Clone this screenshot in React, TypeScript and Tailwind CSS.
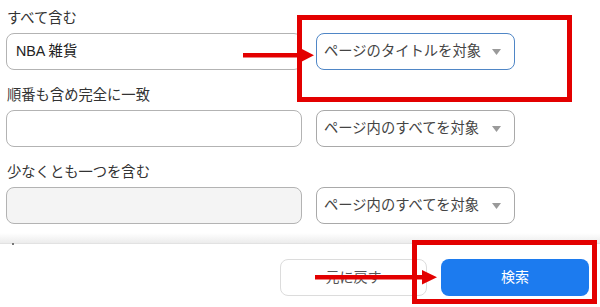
const FONT = { fontFamily: '"Liberation Sans", "Noto Sans CJK JP", sans-serif' };

function Caret() {
  return (
    <svg width="9" height="6" viewBox="0 0 9 6" className="shrink-0">
      <path d="M0 0 L9 0 L4.5 6 Z" fill="#9a9a9a" />
    </svg>
  );
}

function Select({ label, focused }: { label: string; focused?: boolean }) {
  return (
    <div
      className={`flex h-[37px] w-[199px] items-center justify-between rounded-[8px] border bg-white pl-[7px] pr-[13px] text-[14.3px] text-[#444] ${
        focused ? "border-[#4f86c6]" : "border-[#a9a9a9]"
      }`}
    >
      <span>{label}</span>
      <Caret />
    </div>
  );
}

const rows = [
  { label: "すべて含む", value: "NBA 雑貨", select: "ページのタイトルを対象", focused: true },
  { label: "順番も含め完全に一致", value: "", select: "ページ内のすべてを対象" },
  { label: "少なくとも一つを含む", value: "", select: "ページ内のすべてを対象", disabled: true },
];

export default function App() {
  return (
    <div className="relative h-[307px] w-[600px] overflow-hidden bg-white" style={FONT}>
      <div className="flex flex-col gap-[15px] pl-[6px] pt-[8px]">
        {rows.map((r) => (
          <div key={r.label} className="flex flex-col gap-[5px]">
            <div className="h-[20px] pl-[1px] text-[14.3px] leading-[20px] text-[#333]">{r.label}</div>
            <div className="flex items-start gap-[14px]">
              <div
                className={`flex h-[37px] w-[296px] items-center rounded-[8px] border border-[#b3b3b3] px-[9px] text-[14.3px] text-[#222] ${
                  r.disabled ? "bg-[#f4f4f4]" : "bg-white"
                }`}
              >
                {r.value}
              </div>
              <Select label={r.select} focused={r.focused} />
            </div>
          </div>
        ))}
      </div>

      {/* sticky footer */}
      <div className="relative mt-[9px]">
        <div className="h-[10px] bg-gradient-to-b from-white to-[#ececec]" />
        <span className="absolute left-[12px] top-[10px] h-[2px] w-[2px] bg-[#777]" />
        <div className="flex justify-end gap-[14px] border-t border-[#e2e2e2] pr-[11px] pt-[15px]">
          <button className="h-[37px] w-[147px] rounded-[8px] border border-[#dcdcdc] bg-white text-[14px] text-[#555]">
            元に戻す
          </button>
          <button className="h-[37px] w-[148px] rounded-[8px] bg-[#1c7bef] text-[14px] text-white">
            検索
          </button>
        </div>
      </div>

      {/* annotations */}
      <div className="pointer-events-none absolute left-[297px] top-[15px] h-[87px] w-[275px] border-[5px] border-[#e30000]" />
      <div className="pointer-events-none absolute left-[412px] top-[240px] h-[64px] w-[185px] border-[5px] border-[#e30000]" />
      <svg className="pointer-events-none absolute left-0 top-0" width="600" height="307" viewBox="0 0 600 307">
        <rect x="243" y="53" width="59" height="4.5" fill="#e30000" />
        <path d="M300 48 L314 55.2 L300 62.5 Z" fill="#e30000" />
        <rect x="315" y="275" width="108" height="4.5" fill="#e30000" />
        <path d="M422 270 L437 277.2 L422 284.5 Z" fill="#e30000" />
      </svg>
    </div>
  );
}
